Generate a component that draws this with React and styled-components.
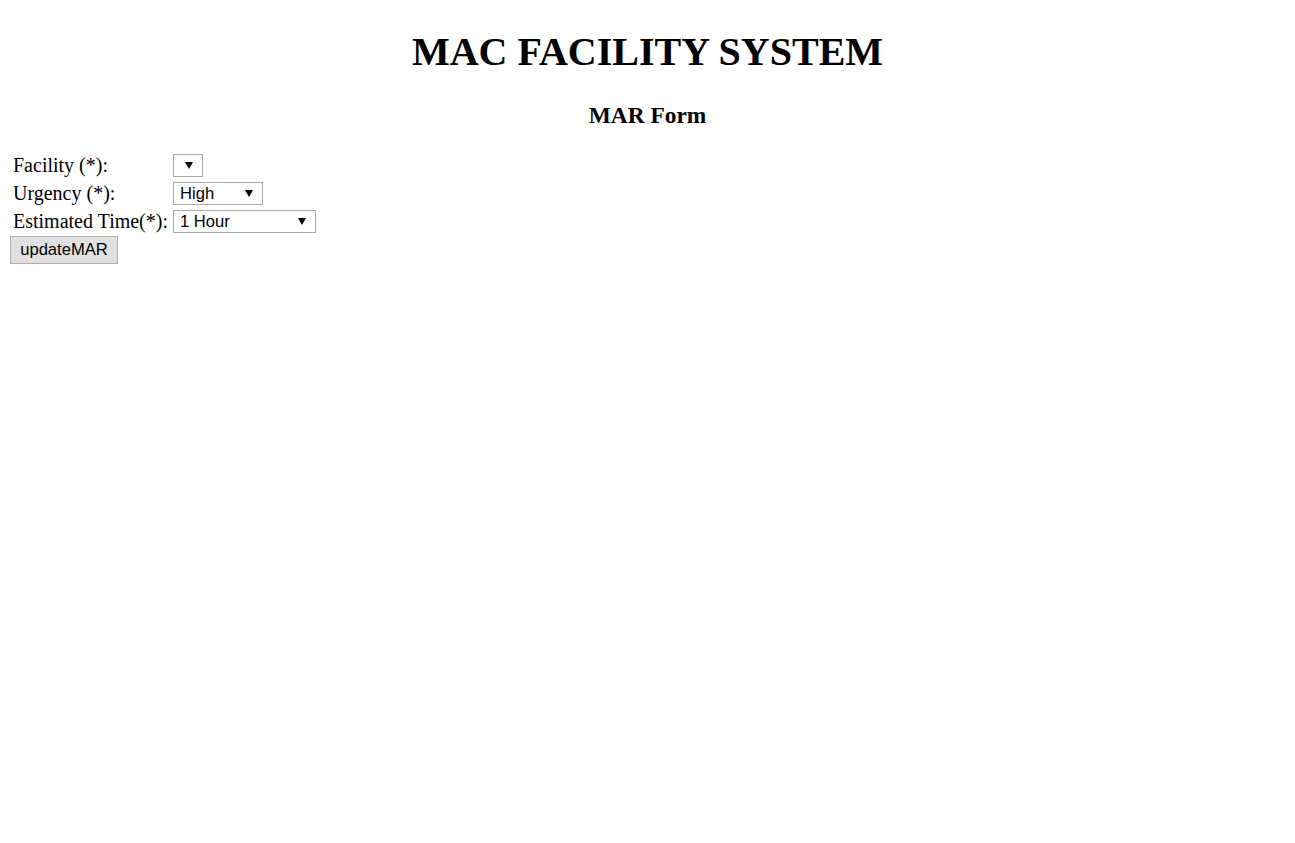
import React from "react";
import styled, { createGlobalStyle } from "styled-components";

const GlobalStyle = createGlobalStyle`
  body {
    margin: 10px;
    background: #fff;
    color: #000;
    font-family: "Liberation Serif", "Times New Roman", serif;
    font-size: 20px;
  }
`;

const Title = styled.h1`
  margin: 19px 0 27px;
  font-size: 40px;
  font-weight: bold;
  text-align: center;
  line-height: 46px;
`;

const SubTitle = styled.h3`
  margin: 0 0 23px;
  font-size: 23.4px;
  font-weight: bold;
  text-align: center;
  line-height: 27px;
`;

const FormGrid = styled.div`
  display: grid;
  grid-template-columns: auto auto;
  justify-content: start;
  column-gap: 5px;
  row-gap: 4px;
  padding: 1px 3px 0;
`;

const Label = styled.label`
  display: flex;
  align-items: center;
  height: 24px;
  line-height: 24px;
  white-space: nowrap;
`;

const SelectWrap = styled.div`
  position: relative;
  display: flex;
  align-items: center;
  width: ${(p) => p.$width}px;
  height: 24px;

  &::after {
    content: "";
    position: absolute;
    right: 10px;
    top: 9px;
    border-left: 4px solid transparent;
    border-right: 4px solid transparent;
    border-top: 7px solid #000;
    pointer-events: none;
  }
`;

const Select = styled.select`
  appearance: none;
  -webkit-appearance: none;
  width: 100%;
  height: 23px;
  margin: 0;
  padding: 0 0 0 6px;
  border: 1px solid #a9a9a9;
  border-radius: 0;
  background: #fff;
  color: #000;
  font-family: "Liberation Sans", Arial, sans-serif;
  font-size: 16.6px;
  outline: none;
`;

const Button = styled.button`
  display: block;
  width: 108px;
  height: 28px;
  margin: 3px 0 0;
  padding: 0;
  border: 1px solid #adadad;
  border-radius: 0;
  background: #e1e1e1;
  color: #000;
  font-family: "Liberation Sans", Arial, sans-serif;
  font-size: 16.6px;
`;

const fields = [
  { label: "Facility (*):", width: 30, options: [""] },
  { label: "Urgency (*):", width: 90, options: ["High", "Medium", "Low"] },
  {
    label: "Estimated Time(*):",
    width: 143,
    options: ["1 Hour", "2 Hours", "4 Hours", "1 Day", "1 Week"],
  },
];

const App = () => {
  return (
    <>
      <GlobalStyle />
      <Title>MAC FACILITY SYSTEM</Title>
      <SubTitle>MAR Form</SubTitle>
      <FormGrid>
        {fields.map((f) => (
          <React.Fragment key={f.label}>
            <Label>{f.label}</Label>
            <SelectWrap $width={f.width}>
              <Select defaultValue={f.options[0]}>
                {f.options.map((o) => (
                  <option key={o} value={o}>
                    {o}
                  </option>
                ))}
              </Select>
            </SelectWrap>
          </React.Fragment>
        ))}
      </FormGrid>
      <Button>updateMAR</Button>
    </>
  );
};

export default App;
